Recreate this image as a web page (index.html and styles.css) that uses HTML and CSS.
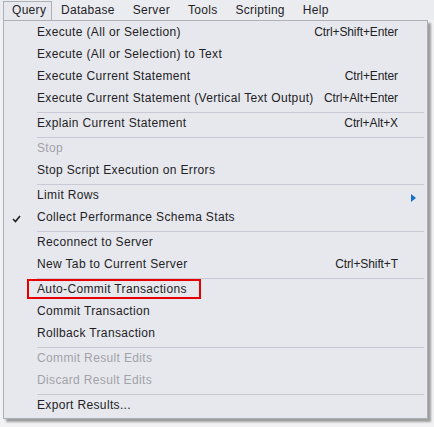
FILE: index.html
```html
<!DOCTYPE html>
<html>
<head>
<meta charset="utf-8">
<link rel="stylesheet" href="styles.css">
</head>
<body>
<div class="menubar">
  <span class="mb-item active">Query</span>
  <span class="mb-item">Database</span>
  <span class="mb-item">Server</span>
  <span class="mb-item">Tools</span>
  <span class="mb-item">Scripting</span>
  <span class="mb-item">Help</span>
</div>
<div class="menu">
  <div class="item"><span class="label">Execute (All or Selection)</span><span class="key">Ctrl+Shift+Enter</span></div>
  <div class="item"><span class="label">Execute (All or Selection) to Text</span></div>
  <div class="item"><span class="label">Execute Current Statement</span><span class="key">Ctrl+Enter</span></div>
  <div class="item"><span class="label">Execute Current Statement (Vertical Text Output)</span><span class="key">Ctrl+Alt+Enter</span></div>
  <div class="sep"></div>
  <div class="item"><span class="label">Explain Current Statement</span><span class="key">Ctrl+Alt+X</span></div>
  <div class="sep"></div>
  <div class="item disabled"><span class="label">Stop</span></div>
  <div class="item"><span class="label">Stop Script Execution on Errors</span></div>
  <div class="sep"></div>
  <div class="item"><span class="label">Limit Rows</span><svg class="arrow" width="5" height="8" viewBox="0 0 5 8"><polygon points="0,0 5,4 0,8" fill="#1470c8"/></svg></div>
  <div class="item"><svg class="check" width="9" height="8" viewBox="0 0 9 8"><polyline points="1,4 3.5,6.5 8,1" fill="none" stroke="#1e1e1e" stroke-width="1.6"/></svg><span class="label">Collect Performance Schema Stats</span></div>
  <div class="sep"></div>
  <div class="item"><span class="label">Reconnect to Server</span></div>
  <div class="item"><span class="label">New Tab to Current Server</span><span class="key">Ctrl+Shift+T</span></div>
  <div class="sep"></div>
  <div class="item highlight"><span class="label">Auto-Commit Transactions</span><span class="redbox"></span></div>
  <div class="item"><span class="label">Commit Transaction</span></div>
  <div class="item"><span class="label">Rollback Transaction</span></div>
  <div class="sep"></div>
  <div class="item disabled"><span class="label">Commit Result Edits</span></div>
  <div class="item disabled"><span class="label">Discard Result Edits</span></div>
  <div class="sep"></div>
  <div class="item"><span class="label">Export Results...</span></div>
</div>
</body>
</html>
```
FILE: styles.css
```css
html, body {
  margin: 0;
  padding: 0;
}
body {
  background: #f2f2f4;
  font-family: "Liberation Sans", Arial, sans-serif;
  font-size: 12px;
  color: #222226;
  width: 434px;
  height: 427px;
  overflow: hidden;
}
.menubar {
  display: flex;
  height: 20px;
  padding-left: 3px;
  background: #ebecf0;
  align-items: flex-end;
}
.mb-item {
  height: 18px;
  line-height: 16px;
  padding: 0 8px;
  border: 1px solid transparent;
  border-bottom: none;
  letter-spacing: 0.3px;
}
.mb-item.active {
  border-color: #aeb0b8;
  background: #e7e8ed;
  position: relative;
  z-index: 2;
  width: 31px;
  padding: 0 8px;
  text-align: center;
}
.menu {
  position: relative;
  margin-left: 3px;
  width: 423px;
  background: #e7e8ed;
  border: 1px solid #aeb0b8;
  padding: 2px 0 0 0;
  box-shadow: 3px 3px 2px rgba(0, 0, 0, 0.35);
  z-index: 1;
}
.item {
  position: relative;
  display: flex;
  align-items: center;
  height: 22px;
  padding: 0 29px 4px 33px;
  line-height: 18px;
  box-sizing: border-box;
}
.label {
  flex: 1;
  white-space: nowrap;
  letter-spacing: 0.35px;
}
.key {
  white-space: nowrap;
  letter-spacing: -0.1px;
}
.disabled {
  color: #a2a2a8;
}
.sep {
  height: 1px;
  margin: 1px 3px 1px 33px;
  background: #c9c9d6;
}
.arrow {
  position: absolute;
  right: 11px;
  top: 8px;
}
.check {
  position: absolute;
  left: 8px;
  top: 7px;
}
.redbox {
  position: absolute;
  left: 23px;
  top: -1px;
  width: 170px;
  height: 16px;
  border: 2px solid #e60000;
}
```
